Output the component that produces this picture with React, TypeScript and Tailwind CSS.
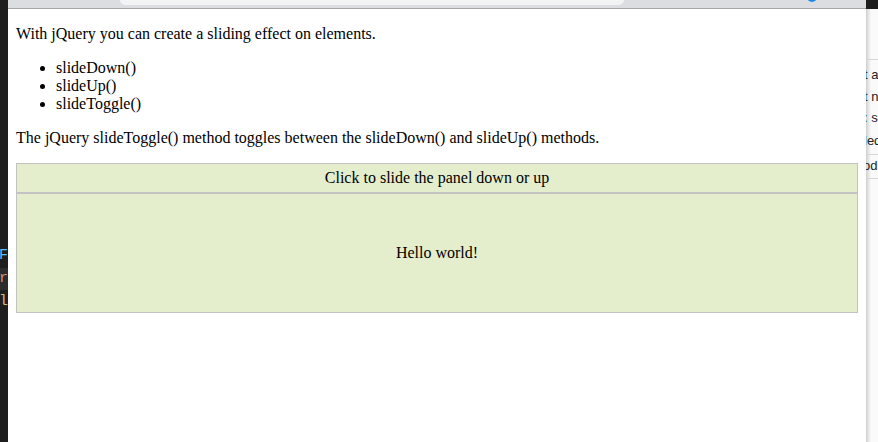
export default function App() {
  const rightItems = [
    { text: "t all", mt: "mt-[8px]" },
    { text: "t new", mt: "mt-[8px]" },
    { text: ": se", mt: "mt-[7px]" },
    { text: "led", mt: "mt-[9px]" },
  ]

  return (
    <div className="flex h-[442px] w-[878px] overflow-hidden bg-[#1e1e1e] font-['Liberation_Serif',serif] text-black">
      {/* editor strip on the left */}
      <div className="flex w-[8px] shrink-0 flex-col items-end overflow-hidden pt-[246px] font-['Liberation_Mono',monospace] text-[15px] leading-[20px]">
        <div className="flex h-[20px] justify-end whitespace-nowrap">
          <span className="text-[#9cdcfe]">obj</span>
          <span className="text-[#9d9d9d]">·</span>
          <span className="text-[#4fc1ff]">F</span>
        </div>
        <div className="mt-[2px] flex h-[22px] w-[8px] justify-end whitespace-nowrap bg-[#2c2c2d] leading-[22px] text-[#ce9178]">
          <span>str</span>
        </div>
        <div className="mt-[2px] flex h-[20px] justify-end whitespace-nowrap text-[#d7ba7d]">
          <span>col</span>
        </div>
      </div>

      {/* browser window */}
      <div className="flex w-[858px] shrink-0 flex-col">
        <div className="relative h-[9px] shrink-0 border-b border-[#a7a8ab] bg-[#dcdde1]">
          <div className="absolute left-[112px] top-0 h-[5px] w-[504px] rounded-b-[6px] bg-[#f1f3f4]" />
          <div className="absolute left-[799px] top-[-8px] h-[10px] w-[10px] rounded-full bg-[#1a8ae8]" />
        </div>
        <div className="flex-1 bg-white px-[8px] pt-[16px] text-[16px] leading-[18px]">
          <p>With jQuery you can create a sliding effect on elements.</p>
          <ul className="my-[16px] list-disc pl-[40px]">
            <li>slideDown()</li>
            <li>slideUp()</li>
            <li>slideToggle()</li>
          </ul>
          <p>The jQuery slideToggle() method toggles between the slideDown() and slideUp() methods.</p>
          <div className="mt-[16px] border border-[#c3c3c3] bg-[#e5eecc] p-[5px] text-center">
            Click to slide the panel down or up
          </div>
          <div className="border border-[#c3c3c3] bg-[#e5eecc] p-[50px] text-center">Hello world!</div>
        </div>
      </div>

      {/* popup peeking out on the right */}
      <div className="flex w-[12px] shrink-0 flex-col">
        <div className="h-[9px] shrink-0 bg-[#1e1e1e]" />
        <div className="flex flex-1 flex-col overflow-hidden bg-[linear-gradient(to_right,#cfcfcf,#fafafa_5px)] font-['Liberation_Sans',sans-serif] text-[13px] leading-[14px] text-[#222]">
          <div className="h-[51px] shrink-0 border-b border-[#d6d6d6]" />
          {rightItems.map((it) => (
            <div key={it.text} className={`${it.mt} h-[14px] whitespace-nowrap`}>
              <span className="-ml-[2px]">{it.text}</span>
            </div>
          ))}
          <div className="mt-[6px] h-[1px] bg-[#d6d6d6]" />
          <div className="mt-[4px] h-[14px] whitespace-nowrap">
            <span className="-ml-[3px]">ods</span>
          </div>
          <div className="mt-[5px] h-[1px] bg-[#d6d6d6]" />
        </div>
      </div>
    </div>
  )
}
